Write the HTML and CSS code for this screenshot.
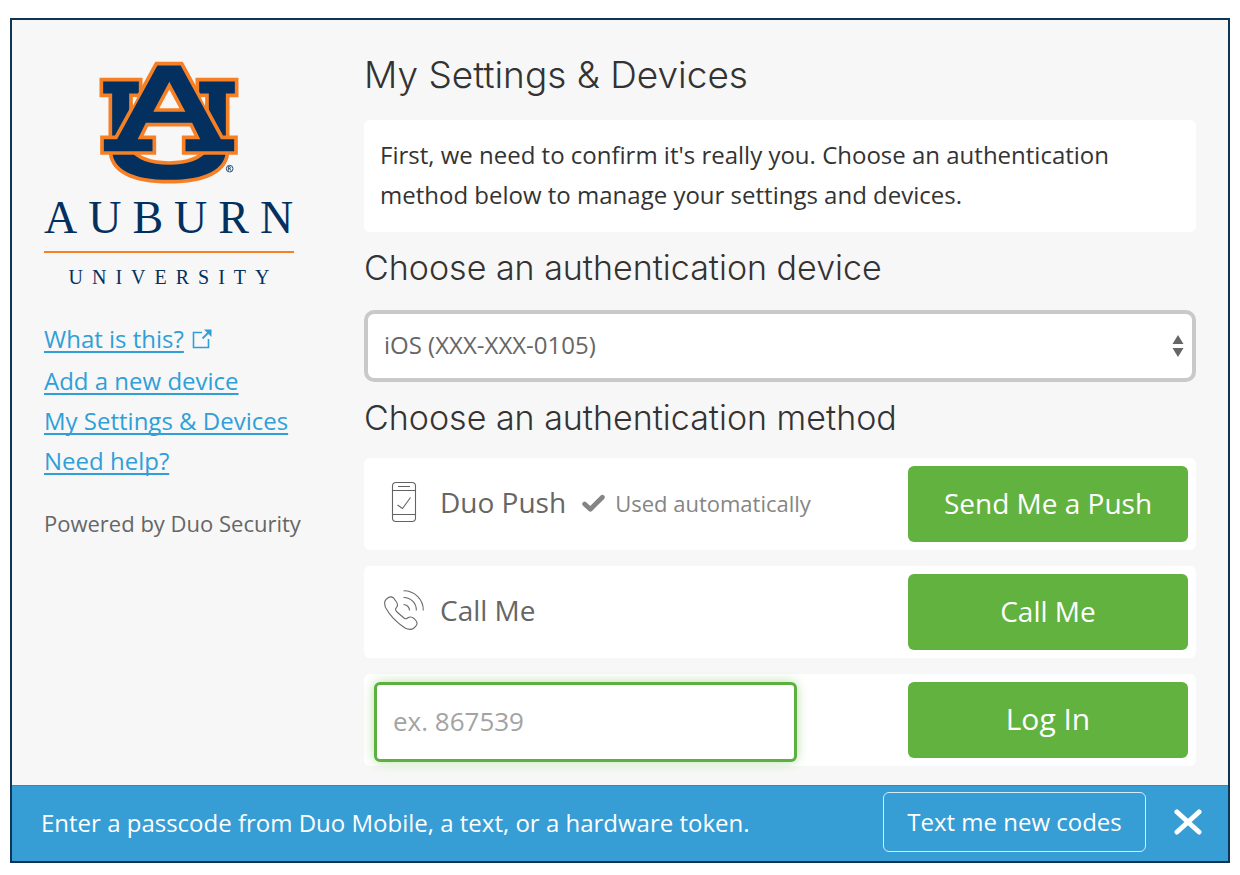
FILE: index.html
```html
<!DOCTYPE html>
<html lang="en">
<head>
<meta charset="utf-8">
<meta name="viewport" content="width=device-width, initial-scale=1">
<title>My Settings &amp; Devices</title>
<link rel="stylesheet" href="styles.css">
</head>
<body>
<div class="panel">
  <div class="content">
    <aside class="sidebar">
      <div class="brand">
        <svg class="brand-mark" viewBox="28 34 420 372" role="img" aria-label="Auburn University logo">
          <g fill="#03305f" stroke="#f68026" stroke-width="11" stroke-linejoin="miter">
            <path d="M62 300 C62 365 130 396 238 396 C346 396 414 365 414 300 L352 296 C330 330 290 340 238 340 C186 340 146 330 124 296 Z"/>
            <path d="M35 90 H153 V137 H124 V210 L62 290 V137 H35 Z"/>
            <path d="M441 90 H323 V137 H352 V210 L414 290 V137 H441 Z"/>
            <path fill-rule="evenodd" d="M200 42 H276 L397 263 H439 V310 H282 V263 H323 L304 225 H172 L153 263 H194 V310 H37 V263 H79 Z M239 108 L200 181 H278 Z"/>
          </g>
          <path d="M130 143 V168 L143 143 Z M346 143 V168 L333 143 Z" fill="#f7f7f7"/>
          <circle cx="420" cy="357" r="10" fill="none" stroke="#2c5177" stroke-width="3"/>
          <path d="M416 363 V351 H421 Q425 354 421 357 H416 M420 357 L424 363" fill="none" stroke="#2c5177" stroke-width="3"/>
        </svg>
        <div class="brand-name">AUBURN</div>
        <div class="brand-sub">UNIVERSITY</div>
      </div>
      <nav class="links">
        <div class="link-row">
          <a href="#">What is this?</a>
          <svg class="external" viewBox="0 0 20 20" aria-hidden="true">
            <path d="M10 3.500H1.500V18.500H16.500V10" fill="none" stroke="#2f9fda" stroke-width="1.600"/>
            <path d="M10.500 9.500L17 3" fill="none" stroke="#2f9fda" stroke-width="1.800"/>
            <path d="M12 0.500H19.500V8Z" fill="#2f9fda"/>
          </svg>
        </div>
        <a href="#">Add a new device</a>
        <a href="#">My Settings &amp; Devices</a>
        <a href="#">Need help?</a>
      </nav>
      <p class="powered">Powered by Duo Security</p>
    </aside>

    <main class="main">
      <h1>My Settings &amp; Devices</h1>
      <p class="notice">First, we need to confirm it's really you. Choose an authentication method below to manage your settings and devices.</p>

      <h2><label for="device">Choose an authentication device</label></h2>
      <div class="select-wrap">
        <select id="device">
          <option>iOS (XXX-XXX-0105)</option>
        </select>
        <svg class="arrows" viewBox="0 0 12 22" aria-hidden="true">
          <path d="M6 0L11.500 9H0.500ZM6 22L11.500 13H0.500Z" fill="#666"/>
        </svg>
      </div>

      <h2>Choose an authentication method</h2>
      <div class="methods">
        <div class="method">
          <div class="method-label">
            <svg class="icon" viewBox="0 0 40 40" fill="none" stroke="#636363" stroke-width="1.100" aria-hidden="true">
              <rect x="8.500" y="0.500" width="23" height="39" rx="3.500"/>
              <path d="M8.500 8.500H31.500M8.500 32.500H31.500M14 4.500H26M13.500 23L18.500 26.500L26.500 15.500"/>
            </svg>
            <span>Duo Push</span>
            <span class="auto">
              <svg class="tick" viewBox="0 0 22 17" aria-hidden="true"><path d="M2.500 9.500L8 14.500L19.500 3" fill="none" stroke="#858585" stroke-width="4.500" stroke-linecap="round" stroke-linejoin="round"/></svg>
              Used automatically
            </span>
          </div>
          <button class="action" type="button">Send Me a Push</button>
        </div>
        <div class="method">
          <div class="method-label">
            <svg class="icon" viewBox="0 0 40 40" fill="none" stroke="#686868" stroke-width="1.100" aria-hidden="true">
              <path d="M2.200 9.200L4.500 7.500Q7 6 9.500 8L12.500 12Q14.500 15 12.500 17.500L11.500 19Q11.500 20.500 13 22L20.500 28.500Q22 29.300 23.500 28L25 27.200Q27.500 26.300 30 28.500L32.200 31Q34 33.500 32 36L29.500 38.500Q26 40.500 21 38Q8 29.500 1.500 17.500Q-0.500 12 2.200 9.200Z"/>
              <path d="M19.500 14.500A6 6 0 0 1 25.500 20.500M19.500 7.500A12.500 12.500 0 0 1 32.300 20.500M19.500 0.800A19.500 19.500 0 0 1 39.300 20.500"/>
            </svg>
            <span>Call Me</span>
          </div>
          <button class="action" type="button">Call Me</button>
        </div>
        <form class="method passcode">
          <input type="text" aria-label="Passcode" placeholder="ex. 867539">
          <button class="action login" type="button">Log In</button>
        </form>
      </div>
    </main>
  </div>

  <footer class="message">
    <p>Enter a passcode from Duo Mobile, a text, or a hardware token.</p>
    <button class="codes" type="button">Text me new codes</button>
    <button class="close" type="button" aria-label="Close">
      <svg viewBox="0 0 28 26" aria-hidden="true"><path d="M3 3L25 23M25 3L3 23" stroke="#fff" stroke-width="5" stroke-linecap="round"/></svg>
    </button>
  </footer>
</div>
</body>
</html>
```

FILE: styles.css
```css
* { box-sizing: border-box; }

body {
  margin: 0;
  padding: 18px 10px 12px;
  background: #fff;
  color: #333;
  font-family: "Open Sans", "Noto Sans", sans-serif;
  font-size: 24px;
  line-height: 40px;
}

h1, h2, p { margin: 0; }
svg { display: block; }
button, input, select { font: inherit; }

.panel {
  border: 2px solid #0f3555;
  background: #f7f7f7;
}

.content {
  display: flex;
  gap: 32px;
  padding: 28px 32px 19px;
}

/* Sidebar */
.sidebar {
  flex: 0 0 288px;
  padding-top: 13px;
}

.brand {
  display: flex;
  flex-direction: column;
  align-items: center;
  width: 250px;
  color: #03305f;
  font-family: "Liberation Serif", serif;
}
.brand-mark { width: 140px; height: 124px; }
.brand-name {
  align-self: stretch;
  padding: 3px 0;
  border-bottom: 2px solid #f68026;
  font-size: 46px;
  line-height: 60px;
  letter-spacing: 11px;
  white-space: nowrap;
}
.brand-sub {
  padding: 4px 0 0 9px;
  font-size: 20px;
  letter-spacing: 9px;
}

.links {
  display: flex;
  flex-direction: column;
  align-items: flex-start;
  margin-top: 22px;
}
.links a {
  color: #2f9fda;
  text-decoration: underline;
  text-decoration-thickness: 2px;
  text-underline-offset: 3px;
  text-decoration-skip-ink: none;
}
.link-row {
  display: flex;
  align-items: center;
  gap: 8px;
  margin-bottom: 2px;
}
.external { width: 20px; height: 20px; }
.powered {
  margin-top: 22px;
  color: #666;
  font-size: 22px;
}

/* Main column */
.main { flex: 1; min-width: 0; }

h1, h2 {
  font-family: Inter, "Open Sans", sans-serif;
  font-weight: 300;
}
h1 {
  margin-bottom: 18px;
  font-size: 37px;
  line-height: 54px;
}
h2 {
  margin: 16px 0 22px;
  font-size: 34px;
  line-height: 40px;
}
.notice {
  padding: 15px 16px 17px;
  border-radius: 6px;
  background: #fff;
}

.select-wrap { position: relative; }
.select-wrap + h2 { margin-bottom: 20px; }
.select-wrap select {
  display: block;
  width: 100%;
  height: 72px;
  padding: 0 40px 2px 16px;
  border: 4px solid #c9c9c9;
  border-radius: 10px;
  background: #fff;
  color: #666;
  appearance: none;
}
.arrows {
  position: absolute;
  top: 25px;
  right: 12px;
  width: 12px;
  height: 22px;
  pointer-events: none;
}

.methods {
  display: flex;
  flex-direction: column;
  gap: 16px;
}
.method {
  display: flex;
  align-items: center;
  justify-content: space-between;
  padding: 8px;
  border-radius: 6px;
  background: #fff;
}
.method-label {
  display: flex;
  align-items: center;
  gap: 16px;
  padding: 0 0 4px 12px;
  color: #666;
  font-size: 28px;
}
.icon { width: 40px; height: 40px; }
.auto {
  display: flex;
  align-items: center;
  gap: 10px;
  padding-top: 2px;
  color: #858585;
  font-size: 22px;
}
.tick { width: 23px; height: 18px; }

.action {
  flex: 0 0 280px;
  height: 76px;
  padding: 0 0 2px;
  border: 0;
  border-radius: 6px;
  background: #62b240;
  color: #fff;
  font-size: 28px;
}
.login { font-size: 30px; }

.passcode {
  align-items: flex-start;
  padding: 8px 8px 4px 10px;
}
.passcode input {
  width: 52%;
  height: 80px;
  padding: 0 16px 2px;
  border: 3px solid #5bb040;
  border-radius: 6px;
  outline: 0;
  background: #fff;
  box-shadow: 0 0 12px #b9dfa9;
  color: #333;
  font-size: 26px;
}
.passcode input::placeholder { color: #a3a3a3; opacity: 1; }

/* Message bar */
.message {
  display: flex;
  align-items: center;
  padding: 6px 25px 9px 29px;
  border-top: 1px solid #2c8ac4;
  background: #369dd5;
  color: #fff;
}
.message p { flex: 1; padding-top: 2px; }
.codes {
  width: 263px;
  height: 60px;
  padding: 0;
  border: 1px solid #d5ebf7;
  border-radius: 6px;
  background: transparent;
  color: #fff;
}
.close {
  margin-left: 27px;
  padding: 0;
  border: 0;
  background: transparent;
}
.close svg { width: 30px; height: 26px; }
```
